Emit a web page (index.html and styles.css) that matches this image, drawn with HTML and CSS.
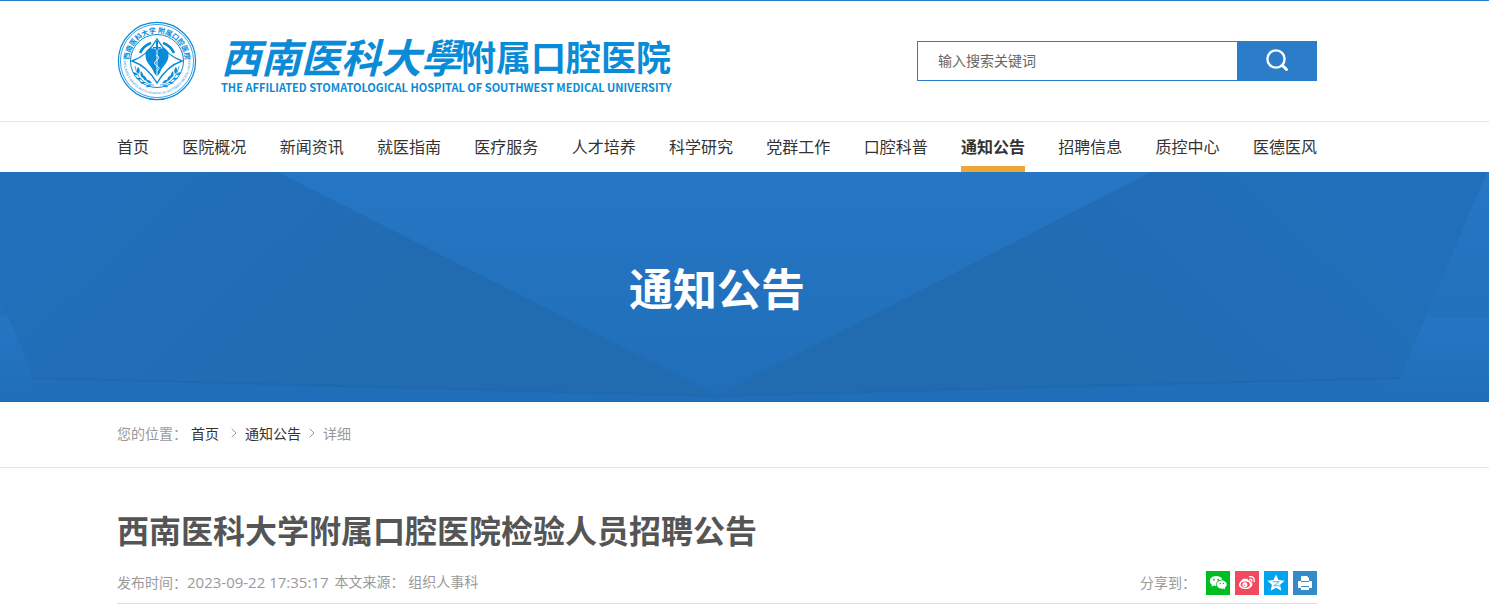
FILE: index.html
```html
<!DOCTYPE html>
<html lang="zh-CN">

<head>
    <meta charset="UTF-8">
    <meta name="viewport" content="width=device-width, initial-scale=1.0">
    <title>西南医科大学附属口腔医院检验人员招聘公告</title>
    <link rel="stylesheet" href="styles.css">
</head>

<body>

    <header class="header">
        <div class="container header-inner">
            <a href="#" class="logo">
                <svg class="seal" viewBox="-40 -40 80 80" aria-hidden="true">
                    <defs>
                        <path id="arcTop" d="M-28 0A28 28 0 0 1 28 0" />
                        <path id="arcBottom" d="M-33 -6A33.500 33.500 0 1 0 33 -6" />
                        <g id="laurel">
                            <path d="M3 24C12 24 20 17 22 5" fill="none" stroke="#0a8bd8" stroke-width=".7" />
                            <path d="M5 22q3-4 6-3q-2 4-6 3zM6 24q4 0 5 2q-4 1-5-2zM10 20q0-4 4-6q1 5-4 6zM11 21q4-1 6 1q-3 2-6-1zM14 17q-1-4 2-7q2 5-2 7zM15 18q3-2 6-1q-2 3-6 1zM18 13q-2-4 1-7q3 4-1 7zM19 14q2-3 5-3q-1 4-5 3z" />
                        </g>
                    </defs>
                    <g fill="none" stroke="#0a8bd8">
                        <circle r="38.6" stroke-width="1.2" />
                        <circle r="36.6" stroke-width=".8" />
                        <circle r="26.5" stroke-width="1" />
                        <path d="M-25 0Q-10-5 0-22Q10-5 25 0Q10 5 0 22Q-10 5-25 0z" stroke-width="1.4" />
                        <path d="M-17-8A19 19 0 0 1-6-18M17-8A19 19 0 0 0 6-18" stroke-width="2.6" />
                    </g>
                    <g fill="#0a8bd8">
                        <use href="#laurel" />
                        <use href="#laurel" transform="scale(-1 1)" />
                        <path d="M0-10C4-15 12-13 11.500-5C11 3 4 6 3 12L0 15L-3 12C-4 6-11 3-11.500-5C-12-13-4-15 0-10z" />
                        <path d="M-1-20h2v9h-2zM-4-14h8v1.500h-8z" />
                    </g>
                    <path d="M0-10V14M-1-6q5 2 1 5q-5 3 0 6q4 2 0 5" fill="none" stroke="#fff" stroke-width=".9" />
                    <text class="seal-cn"><textPath href="#arcTop" startOffset="50%" text-anchor="middle">西南医科大学 附属口腔医院</textPath></text>
                    <text class="seal-en"><textPath href="#arcBottom" startOffset="50%" text-anchor="middle">THE AFFILIATED STOMATOLOGICAL HOSPITAL OF SOUTHWEST MEDICAL UNIVERSITY</textPath></text>
                </svg>
                <span class="logo-text">
                    <span class="logo-cn"><i>西南医科大學</i><b>附属口腔医院</b></span>
                    <span class="logo-en">THE AFFILIATED STOMATOLOGICAL HOSPITAL OF SOUTHWEST MEDICAL UNIVERSITY</span>
                </span>
            </a>
            <form class="search">
                <input type="text" placeholder="输入搜索关键词" aria-label="输入搜索关键词">
                <button type="submit" aria-label="搜索">
                    <svg width="24" height="24" viewBox="0 0 24 24" fill="none" stroke="#fff" stroke-width="2.4" stroke-linecap="round">
                        <circle cx="11" cy="10" r="8.600" />
                        <path d="M17.500 16.500L21.500 20.500" stroke-width="3" />
                    </svg>
                </button>
            </form>
        </div>
    </header>

    <nav class="nav">
        <div class="container nav-inner">
            <a href="#">首页</a>
            <a href="#">医院概况</a>
            <a href="#">新闻资讯</a>
            <a href="#">就医指南</a>
            <a href="#">医疗服务</a>
            <a href="#">人才培养</a>
            <a href="#">科学研究</a>
            <a href="#">党群工作</a>
            <a href="#">口腔科普</a>
            <a href="#" class="active">通知公告</a>
            <a href="#">招聘信息</a>
            <a href="#">质控中心</a>
            <a href="#">医德医风</a>
        </div>
    </nav>

    <div class="banner">
        <svg class="banner-bg" viewBox="0 0 1489 230" preserveAspectRatio="none" aria-hidden="true">
            <defs>
                <linearGradient id="center" x1="0" y1="0" x2="0" y2="1">
                    <stop offset="0" stop-color="#2576c4" />
                    <stop offset="1" stop-color="#206eb9" />
                </linearGradient>
                <linearGradient id="left" gradientUnits="userSpaceOnUse" x1="150" y1="0" x2="330" y2="190">
                    <stop offset="0" stop-color="#216fba" />
                    <stop offset="1" stop-color="#216bb1" />
                </linearGradient>
                <linearGradient id="right" gradientUnits="userSpaceOnUse" x1="1284" y1="0" x2="1104" y2="190">
                    <stop offset="0" stop-color="#216fba" />
                    <stop offset="1" stop-color="#216bb1" />
                </linearGradient>
                <linearGradient id="fold" x1="0" y1="0" x2="0" y2="1">
                    <stop offset="0" stop-color="#2476c3" />
                    <stop offset="1" stop-color="#206eb9" />
                </linearGradient>
            </defs>
            <rect width="1489" height="230" fill="url(#center)" />
            <path d="M1400 145H1489V230H1380zM0 145H30V230H0z" fill="url(#fold)" />
            <path d="M-53 0H278L717 223L34 206z" fill="url(#left)" />
            <path d="M1487 0H1151L717 223L1400 206z" fill="url(#right)" />
            <path d="M34 206L717 224L1400 206" fill="none" stroke="#1e65aa" stroke-width="2" stroke-opacity=".6" />
        </svg>
        <h2>通知公告</h2>
    </div>

    <div class="position">
        <div class="container crumbs">
            <span>您的位置：</span>
            <a href="#">首页</a>
            <svg class="arrow first" viewBox="0 0 6 10"><path d="M.7.7L5 5L.7 9.300" /></svg>
            <a href="#">通知公告</a>
            <svg class="arrow" viewBox="0 0 6 10"><path d="M.7.7L5 5L.7 9.300" /></svg>
            <span>详细</span>
        </div>
    </div>

    <main class="article">
        <div class="container">
            <h1>西南医科大学附属口腔医院检验人员招聘公告</h1>
            <div class="meta">
                <div class="info">
                    <span>发布时间：<time>2023-09-22 17:35:17</time></span>
                    <span>本文来源： 组织人事科</span>
                </div>
                <div class="share">
                    <span>分享到：</span>
                    <a href="#" class="wechat" aria-label="微信">
                        <svg viewBox="0 0 24 24">
                            <path fill="#fff" d="M10 5C6.400 5 3.800 7.200 3.800 10c0 1.600.8 2.900 2.100 3.800L5.400 15.800l2.300-1.200c.7.2 1.500.3 2.300.3h.4c-.9-3.600 2-6.400 6-6.300C15.700 6.400 13.200 5 10 5z" />
                            <path fill="#fff" d="M15.700 9.500c-2.800 0-4.900 1.800-4.900 4.100s2.100 4.100 4.900 4.100c.6 0 1.200-.1 1.700-.2l1.800 1-.4-1.700c1.200-.8 1.900-1.900 1.900-3.200 0-2.300-2.200-4.100-5-4.100z" />
                            <g fill="#00bd24"><circle cx="8" cy="8.700" r=".9" /><circle cx="12.200" cy="8.700" r=".9" /><circle cx="14.200" cy="12.400" r=".7" /><circle cx="17.400" cy="12.400" r=".7" /></g>
                        </svg>
                    </a>
                    <a href="#" class="weibo" aria-label="微博">
                        <svg viewBox="0 0 24 24">
                            <path fill="#fff" d="M10.300 8.200c1.600-.7 3-.4 2.600 1.300 1.600-.6 3.100-.3 2.600 1.400 1.300.4 2 1.200 2 2.300 0 2.500-3 4.800-7 4.800-3.700 0-6.500-1.700-6.500-4.200 0-2.300 3.300-6.200 5.500-6.400 1 0 1.200.4.800.8z" />
                            <ellipse cx="10.300" cy="13.600" rx="4.600" ry="3.100" fill="#f04a60" />
                            <circle cx="9.900" cy="13.800" r="2.500" fill="#fff" />
                            <circle cx="9.300" cy="14.200" r=".8" fill="#f04a60" />
                            <path fill="none" stroke="#fff" stroke-width="1.300" stroke-linecap="round" d="M14.500 5.700c3.200-.6 5.500 1.900 4.700 5M14.800 8.200c1.500-.2 2.400.8 2 2.200" />
                        </svg>
                    </a>
                    <a href="#" class="qzone" aria-label="QQ空间">
                        <svg viewBox="0 0 24 24">
                            <path fill="#fff" d="M12 3.500l2.500 5.500 6 .7-4.400 4.100 1.200 5.900-5.300-2.900-5.300 2.900 1.200-5.900-4.400-4.100 6-.7z" />
                            <path fill="none" stroke="#00a4ee" stroke-width=".7" d="M8.700 10.700h6.500l-5.500 4.100h6.800" />
                        </svg>
                    </a>
                    <button type="button" class="print" aria-label="打印">
                        <svg viewBox="0 0 24 24">
                            <path fill="#fff" d="M8 5h6l2 2v3H8zM5 10h3v2h8v-2h3v7h-3v-2H8v2H5zM8 16h8v3H8z" />
                            <path fill="#fff" d="M7 11h10v3H7z" />
                        </svg>
                    </button>
                </div>
            </div>
        </div>
    </main>

</body>

</html>
```

FILE: styles.css
```css
* {
    box-sizing: border-box;
}

body {
    margin: 0;
    font-family: 'Open Sans', 'Noto Sans CJK SC', sans-serif;
    font-size: 14px;
    color: #333;
    background-color: #fff;
    border-top: 1px solid #2b7dc9;
}

a {
    color: #333;
    text-decoration: none;
}

h1,
h2 {
    margin: 0;
}

.header,
.nav,
.banner,
.position,
.article {
    padding-right: 55px;
}

.container {
    max-width: 1200px;
    margin: 0 auto;
}

/* header */
.header {
    border-bottom: 1px solid #e5e5e5;
}

.header-inner {
    height: 120px;
    display: flex;
    align-items: center;
    justify-content: space-between;
}

.logo {
    display: flex;
    align-items: center;
    gap: 24px;
    color: #0a8bd8;
}

.seal {
    width: 80px;
    height: 80px;
    flex: none;
}

.seal text {
    fill: #0a8bd8;
    font-family: 'Noto Sans CJK SC', sans-serif;
}

.seal-cn {
    font-size: 7px;
    font-weight: bold;
}

.seal-en {
    font-size: 3px;
}

.logo-text {
    display: flex;
    flex-direction: column;
    padding-top: 4px;
    font-family: 'Noto Sans CJK SC', sans-serif;
    white-space: nowrap;
}

.logo-cn {
    display: flex;
    align-items: center;
    line-height: 48px;
}

.logo-cn i {
    font-size: 40px;
    font-weight: bold;
}

.logo-cn b {
    font-size: 35px;
}

.logo-en {
    font-size: 11px;
    font-weight: bold;
    line-height: 14px;
}

.search {
    display: flex;
    width: 400px;
    height: 40px;
}

.search input {
    flex: 1;
    min-width: 0;
    padding: 0 20px 2px;
    border: 1px solid #2b7dc9;
    border-right: 0;
    font: inherit;
    outline: none;
}

.search input::placeholder {
    color: #666;
}

.search button {
    width: 80px;
    padding: 0;
    border: 0;
    background-color: #2b7dc9;
    cursor: pointer;
}

.search svg {
    display: block;
    margin: 0 auto;
}

/* nav */
.nav-inner {
    display: flex;
    justify-content: space-between;
    height: 50px;
}

.nav a {
    font-size: 16px;
    line-height: 50px;
    white-space: nowrap;
}

.nav .active {
    font-weight: bold;
    border-bottom: 6px solid #eca63a;
}

/* banner */
.banner {
    position: relative;
    height: 230px;
    display: flex;
    align-items: center;
    justify-content: center;
    overflow: hidden;
}

.banner-bg {
    position: absolute;
    left: 0;
    top: 0;
    width: 100%;
    height: 100%;
}

.banner h2 {
    position: relative;
    padding-top: 4px;
    color: #fff;
    font-size: 44px;
    line-height: 60px;
}

/* breadcrumb */
.position {
    border-bottom: 1px solid #e5e5e5;
}

.crumbs {
    display: flex;
    align-items: center;
    height: 65px;
    padding-bottom: 4px;
    gap: 8px;
    color: #999;
}

.crumbs span:first-child {
    margin-right: -4px;
}

.arrow {
    width: 6px;
    height: 10px;
    fill: none;
    stroke: #999;
}

.arrow.first {
    margin-left: 4px;
}

/* article */
.article {
    padding-top: 38px;
}

.article h1 {
    font-size: 32px;
    line-height: 50px;
    color: #555;
}

.meta {
    display: flex;
    align-items: center;
    justify-content: space-between;
    margin-top: 4px;
    padding: 10px 0 8px;
    border-bottom: 1px solid #ddd;
    color: #999;
}

.info {
    display: flex;
    gap: 6px;
    line-height: 24px;
}

.info time {
    font-size: 15px;
}

.share {
    display: flex;
    align-items: center;
    gap: 5px;
    line-height: 24px;
}

.share span {
    margin-right: 5px;
}

.share a,
.share button {
    width: 24px;
    height: 24px;
    padding: 0;
    border: 0;
}

.share svg {
    display: block;
    width: 24px;
    height: 24px;
}

.wechat {
    background-color: #00bd24;
}

.weibo {
    background-color: #f04a60;
}

.qzone {
    background-color: #00a4ee;
}

.print {
    background-color: #338bc8;
    cursor: pointer;
}
```
